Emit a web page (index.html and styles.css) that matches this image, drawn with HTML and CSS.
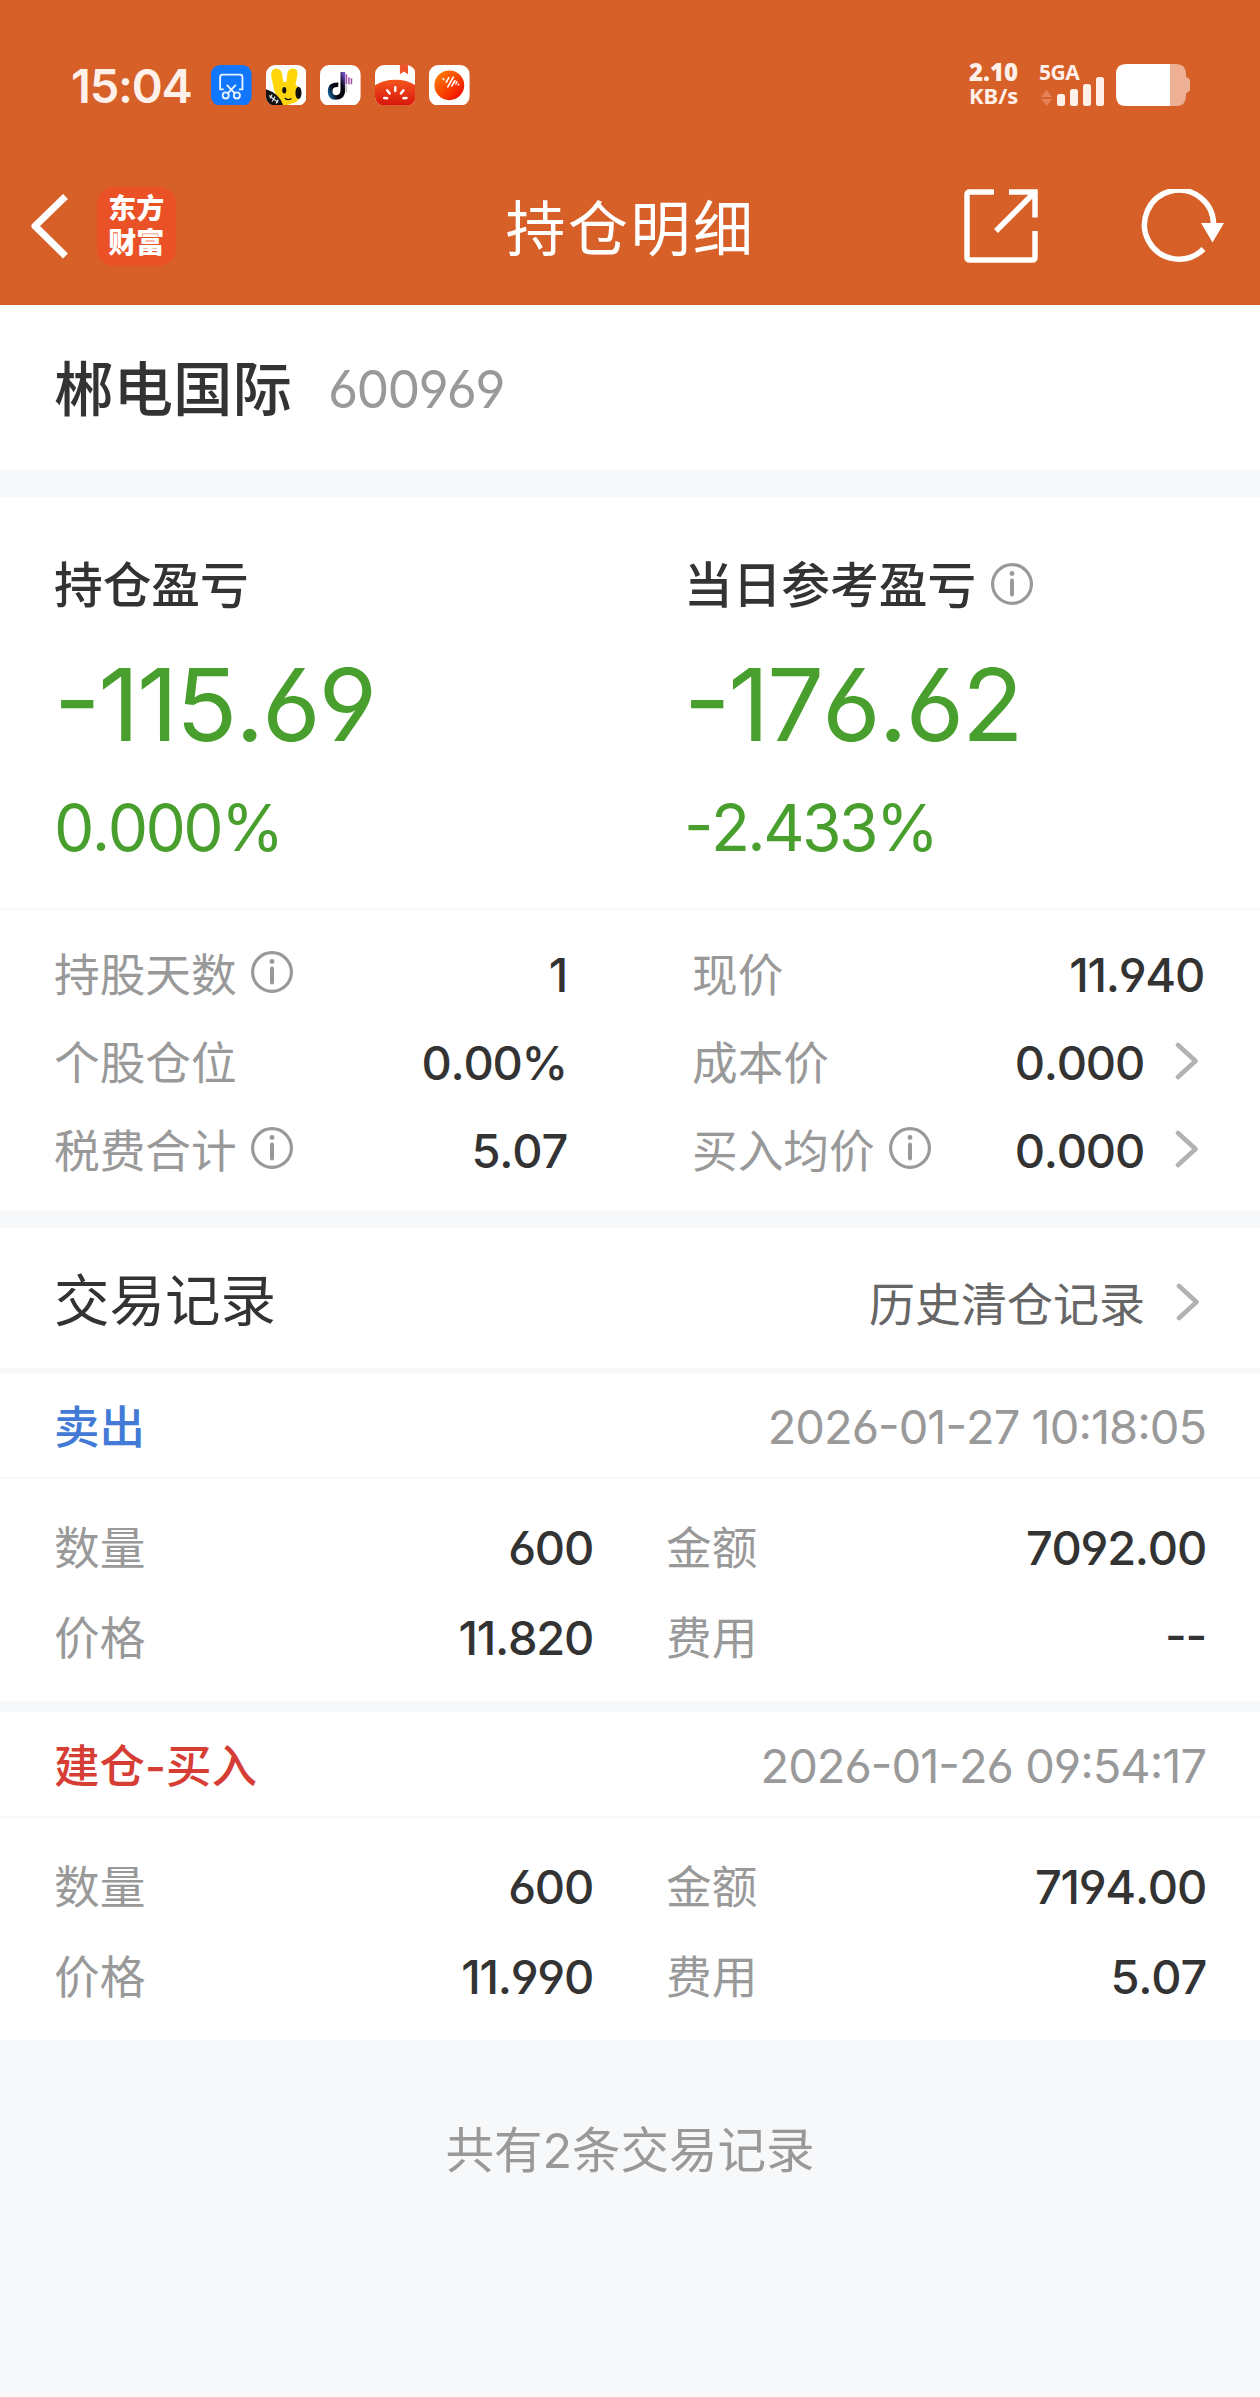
FILE: index.html
```html
<!DOCTYPE html>
<html lang="zh-CN">
<head>
  <meta charset="UTF-8">
  <meta name="viewport" content="width=device-width, initial-scale=1.0">
  <title>持仓明细</title>
  <link rel="stylesheet" href="styles.css">
</head>
<body>
  <!-- Shared icons -->
  <svg class="sprite" aria-hidden="true">
    <symbol id="info" viewBox="0 0 42 42">
      <circle cx="21" cy="21" r="19.4" fill="none" stroke="#999" stroke-width="3.2"/>
      <circle cx="21" cy="10.500" r="2.400" fill="#999"/>
      <path d="M21 17.500v14" stroke="#999" stroke-width="4" stroke-linecap="round"/>
    </symbol>
    <symbol id="arrow" viewBox="0 0 24 38">
      <path d="M3 3l17.500 16L3 35" fill="none" stroke="#b2b2b2" stroke-width="4.600" stroke-linecap="round" stroke-linejoin="round"/>
    </symbol>
  </svg>

  <header class="header">
    <div class="status-bar">
      <span class="time">15:04</span>
      <div class="apps">
        <svg viewBox="0 0 40 40">
          <rect width="40" height="40" rx="9" fill="#1277ff"/>
          <g fill="none" stroke="#e9f3ff" stroke-width="1.8">
            <path d="M12.500 24H9V12q0-2.500 2.500-2.500h17q2.500 0 2.500 2.500v12h-3.500"/>
            <path d="M15.500 19.500l8.500 9M24.500 19.500l-8.500 9"/>
            <circle cx="14.500" cy="30" r="3"/>
            <circle cx="25.500" cy="30" r="3"/>
          </g>
        </svg>
        <svg viewBox="0 0 40 40">
          <clipPath id="tile"><rect width="40" height="40" rx="9"/></clipPath>
          <g clip-path="url(#tile)">
            <rect width="40" height="40" fill="#fff"/>
            <path d="M8 25L5 10q0-6 5-6.500 5 0 6 6l1 7h3l1-8q1-5 5.500-5 5 0 4.500 6l-2 10q6 4 5 10-1 7-10 9l-6 2H14z" fill="#ffd60a"/>
            <path d="M0 24q13 4 17 16H0z" fill="#111"/>
            <ellipse cx="18" cy="25" rx="2" ry="3.200" fill="#111"/>
            <ellipse cx="32" cy="27.500" rx="3" ry="6" fill="#111"/>
            <path d="M18.500 32.500q3 3 6.500 0.500" fill="none" stroke="#111" stroke-width="1.300"/>
            <path d="M3 30l9 7M6 29l-2 4M9 31l-3 5M12 34l-2 4" stroke="#ddd" stroke-width="1.200"/>
          </g>
        </svg>
        <svg viewBox="0 0 40 40">
          <linearGradient id="note" x1="0" y1="1" x2="1" y2="0">
            <stop offset="0" stop-color="#15629a"/>
            <stop offset=".3" stop-color="#050510"/>
            <stop offset=".7" stop-color="#050510"/>
            <stop offset="1" stop-color="#6a4cc0"/>
          </linearGradient>
          <rect width="40" height="40" rx="9" fill="#fff"/>
          <path d="M18 19.500q-8-.5-8 6.500 0 6 6 6 6.500 0 6.500-7V7" fill="none" stroke="url(#note)" stroke-width="4.600"/>
          <path d="M26 9v10M28.500 12v7M31 13v6" stroke="#a44fa8" stroke-width="1.500"/>
          <path d="M26 20v7" stroke="#bbb" stroke-width="1.200"/>
        </svg>
        <svg viewBox="0 0 40 40">
          <linearGradient id="tomato" x1="0" y1="0" x2="0" y2="1">
            <stop offset="0" stop-color="#f5551d"/>
            <stop offset="1" stop-color="#d8160c"/>
          </linearGradient>
          <g clip-path="url(#tile)">
            <rect width="40" height="40" fill="#fff"/>
            <path d="M24.500 0h8v9l-4-2.500-4 2.500z" fill="#f0522a"/>
            <path d="M0 20q8-5.500 20-5.500t20 5.500v20H0z" fill="url(#tomato)"/>
            <path d="M20 22v3.500M12 25l2.500 3M28 25l-2.500 3M9 32.500l3 .2M31 32.500l-3 .2" stroke="#fff" stroke-width="2.400" stroke-linecap="round"/>
          </g>
        </svg>
        <svg viewBox="0 0 40 40">
          <linearGradient id="ball" x1="0" y1="0" x2="1" y2="1">
            <stop offset="0" stop-color="#ff8a00"/>
            <stop offset="1" stop-color="#f20000"/>
          </linearGradient>
          <rect width="40" height="40" rx="9" fill="#fff"/>
          <circle cx="20" cy="20" r="14.700" fill="url(#ball)"/>
          <path d="M14 13.500l.5 1M17 17l2.500-4.500M18.500 21.500l5.500-9.500M22.500 20.500l3-5M26.500 18.500l1-2M29 19.500l.2-.5" stroke="#fff" stroke-width="1.600" stroke-linecap="round"/>
        </svg>
      </div>
      <div class="speed"><b>2.10</b><span>KB/s</span></div>
      <svg class="signal" viewBox="0 0 66 42">
        <path d="M7.500 26l5.500 7H2zM2 35h11l-5.500 7z" fill="#e4835a"/>
        <g fill="#fff0ea">
          <rect x="18" y="30" width="8" height="12" rx="2.500"/>
          <rect x="31" y="25" width="8" height="17" rx="2.500"/>
          <rect x="44" y="20" width="8" height="22" rx="2.500"/>
          <rect x="57" y="13" width="8" height="29" rx="2.500"/>
        </g>
        <text class="network" x="0" y="16">5GA</text>
      </svg>
      <svg class="battery" viewBox="0 0 74 42">
        <path d="M54 0h6q10 0 10 10v3q4 1 4 4v8q0 3-4 4v3q0 10-10 10h-6z" fill="#eeb094"/>
        <path d="M54 0v42H10Q0 42 0 32V10Q0 0 10 0z" fill="#fff"/>
      </svg>
    </div>

    <div class="nav">
      <svg class="back" viewBox="0 0 40 66">
        <path d="M35.500 3.500L5 33l30.500 30" fill="none" stroke="#fff" stroke-width="7" stroke-linejoin="round"/>
      </svg>
      <div class="logo"><span>东方</span><span>财富</span></div>
      <h1 class="title">持仓明细</h1>
      <svg class="share" viewBox="0 0 74 74">
        <g fill="none" stroke="#fff" stroke-width="5.500">
          <path d="M30 3H6Q3 3 3 6v62q0 3 3 3h62q3 0 3-3V42"/>
          <path d="M45 3h26v25.500M70 4L32 42"/>
        </g>
      </svg>
      <svg class="refresh" viewBox="0 0 84 74">
        <path d="M72.500 37A34.500 34.500 0 1 0 62.500 60" fill="none" stroke="#fff" stroke-width="5.500"/>
        <path d="M60 34h23L71.500 53.500z" fill="#fff"/>
      </svg>
    </div>
  </header>

  <section class="stock">
    <h2 class="stock-name">郴电国际</h2>
    <span class="stock-code num">600969</span>
  </section>

  <!-- Profit summary -->
  <section class="profit">
    <div class="profit-item">
      <h3>持仓盈亏</h3>
      <p class="amount num">-115.69</p>
      <p class="percent num">0.000%</p>
    </div>
    <div class="profit-item">
      <h3>当日参考盈亏<svg class="info"><use href="#info"/></svg></h3>
      <p class="amount num">-176.62</p>
      <p class="percent num">-2.433%</p>
    </div>
  </section>

  <section class="details">
    <div class="col col-left">
      <div class="row"><span class="label">持股天数<svg class="info"><use href="#info"/></svg></span><span class="value num">1</span></div>
      <div class="row"><span class="label">个股仓位</span><span class="value num">0.00%</span></div>
      <div class="row"><span class="label">税费合计<svg class="info"><use href="#info"/></svg></span><span class="value num">5.07</span></div>
    </div>
    <div class="col">
      <div class="row"><span class="label">现价</span><span class="value num">11.940</span></div>
      <div class="row"><span class="label">成本价</span><span class="value num">0.000</span><svg class="arrow"><use href="#arrow"/></svg></div>
      <div class="row"><span class="label">买入均价<svg class="info"><use href="#info"/></svg></span><span class="value num">0.000</span><svg class="arrow"><use href="#arrow"/></svg></div>
    </div>
  </section>

  <!-- Trade records -->
  <section class="records-head">
    <h2>交易记录</h2>
    <a class="history">历史清仓记录</a>
    <svg class="arrow"><use href="#arrow"/></svg>
  </section>

  <section class="record">
    <div class="record-head">
      <span class="type sell">卖出</span>
      <span class="date num">2026-01-27 10:18:05</span>
    </div>
    <div class="record-body">
      <div class="row"><span class="label">数量</span><span class="value num">600</span></div>
      <div class="row"><span class="label">金额</span><span class="value num">7092.00</span></div>
      <div class="row"><span class="label">价格</span><span class="value num">11.820</span></div>
      <div class="row"><span class="label">费用</span><span class="value num">--</span></div>
    </div>
  </section>

  <section class="record">
    <div class="record-head">
      <span class="type buy">建仓-买入</span>
      <span class="date num">2026-01-26 09:54:17</span>
    </div>
    <div class="record-body">
      <div class="row"><span class="label">数量</span><span class="value num">600</span></div>
      <div class="row"><span class="label">金额</span><span class="value num">7194.00</span></div>
      <div class="row"><span class="label">价格</span><span class="value num">11.990</span></div>
      <div class="row"><span class="label">费用</span><span class="value num">5.07</span></div>
    </div>
  </section>

  <footer class="footer">共有2条交易记录</footer>
</body>
</html>
```
FILE: styles.css
```css
/* General Styles */
* {
  box-sizing: border-box;
}

body {
  margin: 0;
  min-height: 2397px;
  background: #f7f8fa;
  color: #333;
  font-family: Inter, "Noto Sans CJK SC", sans-serif;
  font-size: 45px;
  line-height: 1;
}

h1, h2, h3, p {
  margin: 0;
  font-weight: 500;
}

svg {
  display: block;
  flex: none;
}

.sprite {
  width: 0;
  height: 0;
  position: absolute;
}

/* Numbers: straight 6 and 9, raised hyphen */
.num {
  font-family: Inter, sans-serif;
  font-feature-settings: "cv03", "cv04", "case";
  font-kerning: none;
  letter-spacing: -0.027em;
  white-space: nowrap;
}

/* Header */
.header {
  height: 305px;
  background: #d75f28;
  color: #fff;
}

.status-bar {
  display: flex;
  align-items: center;
  height: 170px;
  padding: 0 70px 0 71px;
}

.time {
  width: 140px;
  font-size: 47px;
  font-weight: 600;
  letter-spacing: -1.2px;
  color: #fff0ea;
}

.apps {
  display: flex;
  gap: 14px;
}

.apps svg {
  width: 40.600px;
  height: 40.600px;
}

.speed {
  display: flex;
  flex-direction: column;
  margin: -3px 0 0 auto;
  width: 70px;
  font: 700 22px/23px "Noto Sans", sans-serif;
  color: #fff0ea;
}

.speed b {
  font-size: 24px;
  line-height: 24px;
}

.signal {
  width: 66px;
  height: 42px;
  margin-right: 11px;
  overflow: visible;
}

.network {
  font: 700 21px "Noto Sans", sans-serif;
  letter-spacing: -0.5px;
  fill: #fff0ea;
}

.battery {
  width: 74px;
  height: 42px;
}

.nav {
  display: flex;
  align-items: center;
  height: 112px;
  padding: 0 35px 0 30px;
}

.back {
  width: 40px;
  height: 66px;
}

.logo {
  display: flex;
  flex-direction: column;
  align-items: center;
  width: 79px;
  height: 79px;
  margin-left: 27px;
  padding-top: 3px;
  border-radius: 17px;
  background: #ea5127;
  font: 900 28px/34px "Noto Sans CJK SC", sans-serif;
}

.title {
  margin-left: 330px;
  padding-top: 5px;
  width: 461px;
  font-size: 60px;
  font-weight: 400;
  letter-spacing: 2.500px;
}

.share {
  width: 74px;
  height: 74px;
}

.refresh {
  width: 84px;
  height: 74px;
  margin-left: 103px;
}

/* Stock */
.stock {
  display: flex;
  align-items: center;
  height: 165px;
  padding: 5px 54px 0;
  background: #fff;
}

.stock-name {
  font-size: 59.500px;
}

.stock-code {
  margin-left: 36px;
  font-size: 52px;
  letter-spacing: -0.035em;
  color: #999;
}

/* Profit */
.profit {
  display: grid;
  grid-template-columns: 630px 1fr;
  height: 413px;
  margin-top: 27px;
  padding: 60px 0 0 54px;
  border-bottom: 2px solid #f7f8fa;
  background: #fff;
}

.profit h3 {
  display: flex;
  align-items: center;
  height: 56px;
  padding-top: 2px;
  font-size: 48.700px;
}

.profit .info {
  margin: -5px 0 0 15px;
}

.amount {
  margin-top: 39px;
  font-size: 101px;
  font-weight: 400;
  line-height: 104px;
  letter-spacing: -0.022em;
  color: #489f2d;
}

.percent {
  margin-top: 40px;
  font-size: 64px;
  font-weight: 400;
  line-height: 64px;
  letter-spacing: -0.04em;
  color: #489f2d;
}

.info {
  width: 42px;
  height: 42px;
}

/* Details */
.details {
  display: grid;
  grid-template-columns: 513px 512px;
  column-gap: 125px;
  height: 300px;
  padding: 20px 54px 0;
  background: #fff;
}

.row {
  display: flex;
  align-items: center;
  height: 88px;
}

.label {
  display: flex;
  align-items: center;
  padding-top: 3px;
  font-size: 45.700px;
  color: #999;
}

.label .info {
  margin: -7px 0 0 14px;
}

.value {
  margin-left: auto;
  font-size: 47px;
  font-weight: 500;
}

.arrow {
  width: 24px;
  height: 38px;
  margin: -3px 5px 0 31px;
}

/* Records */
.records-head {
  display: flex;
  align-items: center;
  height: 145px;
  margin-top: 18px;
  padding: 5px 54px 0;
  border-bottom: 5px solid #f7f8fa;
  background: #fff;
}

.records-head h2 {
  font-size: 55.500px;
  font-weight: 400;
}

.history {
  margin-left: auto;
  padding-top: 7px;
  font-size: 46px;
  color: #666;
}

.records-head .arrow {
  margin: 3px 6px 0 31px;
}

.record {
  height: 328px;
  background: #fff;
}

.record + .record {
  margin-top: 11px;
}

.record-head {
  display: flex;
  align-items: center;
  justify-content: space-between;
  height: 106px;
  padding: 2px 54px 0;
  border-bottom: 2px solid #f7f8fa;
}

.type {
  padding-top: 3px;
  font-size: 45.500px;
  font-weight: 500;
}

.sell {
  color: #437ad6;
}

.buy {
  color: #d63d35;
}

.date {
  font-size: 47px;
  letter-spacing: -0.021em;
  color: #999;
}

.record-body {
  display: grid;
  grid-template-columns: 539px 540px;
  grid-auto-rows: 90px;
  column-gap: 73px;
  padding: 24px 54px 0;
}

.footer {
  padding-top: 87px;
  font-size: 48.500px;
  text-align: center;
  color: #999;
}
```
